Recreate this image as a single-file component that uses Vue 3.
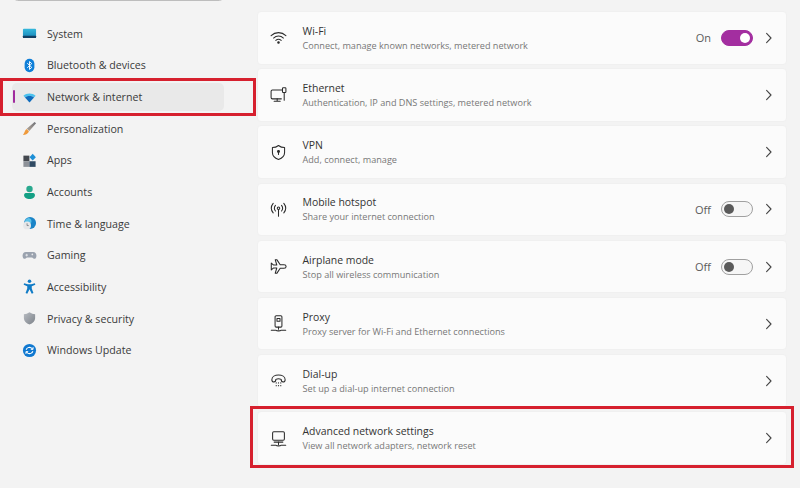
<script setup>
const nav = [
  { label: 'System', icon: 'system' },
  { label: 'Bluetooth & devices', icon: 'bluetooth' },
  { label: 'Network & internet', icon: 'network', active: true },
  { label: 'Personalization', icon: 'brush' },
  { label: 'Apps', icon: 'apps' },
  { label: 'Accounts', icon: 'accounts' },
  { label: 'Time & language', icon: 'time' },
  { label: 'Gaming', icon: 'gaming' },
  { label: 'Accessibility', icon: 'access' },
  { label: 'Privacy & security', icon: 'privacy' },
  { label: 'Windows Update', icon: 'update' }
]
const rows = [
  { title: 'Wi-Fi', sub: 'Connect, manage known networks, metered network', icon: 'wifi', state: 'On', on: true },
  { title: 'Ethernet', sub: 'Authentication, IP and DNS settings, metered network', icon: 'ethernet' },
  { title: 'VPN', sub: 'Add, connect, manage', icon: 'vpn' },
  { title: 'Mobile hotspot', sub: 'Share your internet connection', icon: 'hotspot', state: 'Off', on: false },
  { title: 'Airplane mode', sub: 'Stop all wireless communication', icon: 'plane', state: 'Off', on: false },
  { title: 'Proxy', sub: 'Proxy server for Wi-Fi and Ethernet connections', icon: 'proxy' },
  { title: 'Dial-up', sub: 'Set up a dial-up internet connection', icon: 'dial' },
  { title: 'Advanced network settings', sub: 'View all network adapters, network reset', icon: 'advanced' }
]
</script>

<template>
  <div class="page">
    <aside class="side">
      <div class="searchedge"></div>
      <ul class="nav">
        <li v-for="n in nav" :key="n.label" class="navitem" :class="{ active: n.active }">
          <span v-if="n.active" class="pill"></span>
          <svg class="navicon" viewBox="0 0 16 16">
            <template v-if="n.icon === 'system'">
              <defs><linearGradient id="sys" x1="0" y1="0" x2="0" y2="1"><stop offset="0" stop-color="#35b8dc"/><stop offset="1" stop-color="#1685b8"/></linearGradient></defs>
              <rect x="1" y="3" width="14" height="9.5" rx="1" fill="url(#sys)"/>
              <rect x="1" y="10.4" width="14" height="2.4" rx="0.6" fill="#123f63"/>
            </template>
            <template v-else-if="n.icon === 'bluetooth'">
              <rect x="2.8" y="0.9" width="10.4" height="14.2" rx="5.2" fill="#0f7fd8"/>
              <path d="M5.6 5.6 10.4 10 8 12.2V3.8L10.4 6 5.6 10.4" fill="none" stroke="#fff" stroke-width="1"/>
            </template>
            <template v-else-if="n.icon === 'network'">
              <path d="M1.5 6C5 3 11 3 14.5 6L12.8 8C10 6 6 6 3.2 8Z" fill="#4cc2ee"/>
              <path d="M3.2 8C6 6 10 6 12.8 8L8 13.2Z" fill="#0f6cbd"/>
            </template>
            <template v-else-if="n.icon === 'brush'">
              <defs><linearGradient id="brh" x1="1" y1="0" x2="0" y2="1"><stop offset="0" stop-color="#6d7076"/><stop offset="1" stop-color="#b4a79a"/></linearGradient></defs>
              <path d="M13.4 1 15 2.4 7.8 10.6 5 8.2Z" fill="url(#brh)"/>
              <path d="M4.8 8.6 7.4 10.9C6.8 13.4 4 14.8 1 15 2.6 13.4 2.8 10 4.8 8.6Z" fill="#ef9a3c"/>
            </template>
            <template v-else-if="n.icon === 'apps'">
              <rect x="1.5" y="2.8" width="6.4" height="6" fill="#43474e"/>
              <rect x="1.5" y="8.8" width="6.4" height="6" fill="#8d9198"/>
              <rect x="7.9" y="8.8" width="6.6" height="6" fill="#2f4a63"/>
              <path d="M11.4 0.9 14.8 4.4 11.4 7.9 8 4.4Z" fill="#1d8fd6"/>
            </template>
            <template v-else-if="n.icon === 'accounts'">
              <circle cx="8" cy="4.2" r="3.4" fill="#2aa98f"/>
              <path d="M2.2 11C2.2 9 3.4 8.6 5 8.6H11C12.6 8.6 13.8 9 13.8 11 13.8 13.6 11 15 8 15S2.2 13.6 2.2 11Z" fill="#14a085"/>
            </template>
            <template v-else-if="n.icon === 'time'">
              <circle cx="8.6" cy="7.4" r="6.4" fill="#1a84c7"/>
              <path d="M7 2.2C9.4 2.6 10.6 4.4 10 6.6 9.2 8.4 7 8 5.8 9.8 4.4 8.4 3 7.4 3 6 3.6 4 5 2.6 7 2.2Z" fill="#5cc3ea"/>
              <circle cx="5.4" cy="10" r="4.2" fill="#e6e7e9"/>
              <path d="M5.4 7.8V10.2H7.2" fill="none" stroke="#6b6f75" stroke-width="0.8"/>
            </template>
            <template v-else-if="n.icon === 'gaming'">
              <path d="M4 4.2H12C14 4.2 15.4 6 15.4 8.2 15.4 10.6 14 12 12.6 11.4L10.8 10.2H5.2L3.4 11.4C2 12 0.6 10.6 0.6 8.2 0.6 6 2 4.2 4 4.2Z" fill="#9aa2ae"/>
              <circle cx="11" cy="6.8" r="0.9" fill="#e8eaec"/>
              <path d="M3.6 7.6H6.4M5 6.2V9" stroke="#e8eaec" stroke-width="0.9"/>
            </template>
            <template v-else-if="n.icon === 'access'">
              <circle cx="8" cy="2.4" r="1.9" fill="#0f7bc6"/>
              <path d="M2.2 4.4 6.2 5.6H9.8L13.8 4.4 14.2 6 10.4 7.6V10L12.2 15 10.4 15.6 8 10.8 5.6 15.6 3.8 15 5.6 10V7.6L1.8 6Z" fill="#0f7bc6"/>
            </template>
            <template v-else-if="n.icon === 'privacy'">
              <defs><linearGradient id="prv" x1="0" y1="0" x2="1" y2="1"><stop offset="0" stop-color="#b8bcc2"/><stop offset="1" stop-color="#7c8289"/></linearGradient></defs>
              <path d="M8 1.4C10 2.8 12 3.4 14 3.4V7.6C14 10.8 11.4 13 8 14.4 4.6 13 2 10.8 2 7.6V3.4C4 3.4 6 2.8 8 1.4Z" fill="url(#prv)"/>
            </template>
            <template v-else-if="n.icon === 'update'">
              <circle cx="8" cy="8" r="7" fill="#0f78d0"/>
              <path d="M4.4 7.2C5 5 7.8 4 9.8 5.2L11.4 6.4M11.6 8.8C11 11 8.2 12 6.2 10.8L4.6 9.6" fill="none" stroke="#fff" stroke-width="1.1"/>
              <path d="M11.8 4.4V6.8H9.4M4.2 11.6V9.2H6.6" fill="none" stroke="#fff" stroke-width="1"/>
            </template>
          </svg>
          <span class="navlabel">{{ n.label }}</span>
        </li>
      </ul>
    </aside>

    <main class="main">
      <div v-for="r in rows" :key="r.title" class="card">
        <svg class="rowicon" viewBox="0 0 20 20" fill="none" stroke="#2b2b2b" stroke-width="1.1" stroke-linecap="round" stroke-linejoin="round">
          <template v-if="r.icon === 'wifi'">
            <path d="M2.2 8C6.6 3.8 13.4 3.8 17.8 8"/>
            <path d="M4.8 10.6C7.8 7.8 12.2 7.8 15.2 10.6"/>
            <path d="M7.2 13C8.8 11.6 11.2 11.6 12.8 13"/>
            <circle cx="10" cy="15.2" r="0.8" fill="#2b2b2b"/>
          </template>
          <template v-else-if="r.icon === 'ethernet'">
            <path d="M14 5.2H3.6C2.8 5.2 2.2 5.8 2.2 6.6V13.2C2.2 14 2.8 14.6 3.6 14.6H13"/>
            <path d="M8.6 14.6V17M5.4 17H11.8"/>
            <rect x="14.2" y="3" width="3.6" height="5" rx="0.8"/>
            <path d="M16 8V16"/>
          </template>
          <template v-else-if="r.icon === 'vpn'">
            <path d="M10 2.6C12 4.2 14.2 4.8 16.4 4.8V10C16.4 13.4 13.8 16 10 17.4 6.2 16 3.6 13.4 3.6 10V4.8C5.8 4.8 8 4.2 10 2.6Z"/>
            <circle cx="10" cy="9" r="1" fill="#2b2b2b"/>
            <path d="M10 9V12"/>
          </template>
          <template v-else-if="r.icon === 'hotspot'">
            <circle cx="10" cy="8.6" r="1.3"/>
            <path d="M10 10V17"/>
            <path d="M6.8 5.6C5.4 7.4 5.4 9.8 6.8 11.6M13.2 5.6C14.6 7.4 14.6 9.8 13.2 11.6"/>
            <path d="M4.4 3.6C2 6.6 2 10.6 4.4 13.6M15.6 3.6C18 6.6 18 10.6 15.6 13.6"/>
          </template>
          <template v-else-if="r.icon === 'plane'">
            <path d="M2.4 6.4 4.6 8.4H8.2L6.6 3H8.4L11.8 8.2H15.8C17.2 8.2 18 9 18 10S17.2 11.8 15.8 11.8H11.8L8.4 17H6.6L8.2 11.6H4.6L2.4 13.6Z"/>
          </template>
          <template v-else-if="r.icon === 'proxy'">
            <rect x="6.4" y="1.8" width="7.2" height="12" rx="1.2"/>
            <path d="M8.4 4.8H11.6V7.6H8.4Z"/>
            <path d="M10 13.8V16"/>
            <path d="M2.4 17H7.4C8 18 12 18 12.6 17H17.6"/>
          </template>
          <template v-else-if="r.icon === 'dial'">
            <path d="M3 9.2C3 2.6 17 2.6 17 9.2 17 11 16 11.6 14.8 11.6 13.4 11.6 12.8 10.8 12.8 8.8 11.2 8 8.8 8 7.2 8.8 7.2 10.8 6.6 11.6 5.2 11.6 4 11.6 3 11 3 9.2Z"/>
            <g fill="#2b2b2b" stroke="none">
              <circle cx="7.6" cy="12.6" r="0.65"/><circle cx="10" cy="12.6" r="0.65"/><circle cx="12.4" cy="12.6" r="0.65"/>
              <circle cx="7.6" cy="15.4" r="0.65"/><circle cx="10" cy="15.4" r="0.65"/><circle cx="12.4" cy="15.4" r="0.65"/>
            </g>
          </template>
          <template v-else-if="r.icon === 'advanced'">
            <rect x="3.8" y="3" width="12.4" height="8.8" rx="1.2"/>
            <path d="M5.4 13.8H14.6"/>
            <path d="M10 13.8V16.4"/>
            <path d="M2.4 17H7.4C8 18 12 18 12.6 17H17.6"/>
          </template>
        </svg>
        <div class="text">
          <div class="title">{{ r.title }}</div>
          <div class="sub">{{ r.sub }}</div>
        </div>
        <div class="right">
          <template v-if="r.state">
            <span class="state">{{ r.state }}</span>
            <span class="toggle" :class="{ on: r.on }"><span class="knob"></span></span>
          </template>
          <svg class="chev" viewBox="0 0 8 12" fill="none" stroke="#444" stroke-width="1.1" stroke-linecap="round" stroke-linejoin="round"><path d="M1.6 1.4 6 6 1.6 10.6"/></svg>
        </div>
      </div>
    </main>

    <div class="mark mark-nav"></div>
    <div class="mark mark-adv"></div>
  </div>
</template>

<style>
html, body { margin: 0; background: #f3f3f3; }
</style>

<style scoped>
.page {
  position: relative;
  width: 800px;
  height: 488px;
  overflow: hidden;
  display: flex;
  background: #f3f3f3;
  font-family: "Open Sans", "Noto Sans", sans-serif;
  color: #333;
}
.side {
  width: 257px;
  flex: none;
  position: relative;
}
.searchedge {
  position: absolute;
  left: 14px;
  top: -6px;
  width: 209px;
  height: 7px;
  box-sizing: border-box;
  background: #f8f8f8;
  border: 1px solid #bdbdbd;
  border-radius: 4px;
}
.nav {
  list-style: none;
  margin: 0;
  padding: 19.8px 0 0 12px;
  width: 212px;
  display: flex;
  flex-direction: column;
  gap: 3.65px;
}
.navitem {
  position: relative;
  height: 28px;
  flex: none;
  display: flex;
  align-items: center;
  padding-left: 9.5px;
  font-size: 10.65px;
  border-radius: 5px;
}
.navitem.active { background: #e9e9e9; }
.pill {
  position: absolute;
  left: 0.8px;
  top: 7px;
  width: 2.3px;
  height: 13px;
  border-radius: 1px;
  background: #a02c9e;
}
.navicon { width: 15px; height: 15px; flex: none; }
.navlabel { margin-left: 10.5px; color: #3a3a3a; }
.main {
  flex: 1;
  padding: 11px 13px 0 0;
  display: flex;
  flex-direction: column;
  gap: 3.7px;
}
.card {
  height: 53.5px;
  flex: none;
  box-sizing: border-box;
  background: #fbfbfb;
  border: 1px solid #f0f0f0;
  border-radius: 4px;
  display: flex;
  align-items: center;
  padding: 0 13px 0 11px;
}
.rowicon { width: 19px; height: 19px; flex: none; }
.text { margin-left: 14.5px; flex: 1; }
.title { font-size: 10.45px; line-height: 15px; color: #333; }
.sub { font-size: 9.15px; line-height: 13px; color: #777; }
.right { display: flex; align-items: center; }
.state { font-size: 11px; color: #5c5c5c; margin-right: 10px; }
.toggle {
  width: 32px;
  height: 16px;
  box-sizing: border-box;
  border-radius: 8px;
  border: 1px solid #a0a0a0;
  background: #f6f6f6;
  display: flex;
  align-items: center;
  padding: 0 2px;
  margin-right: 12px;
}
.toggle .knob { width: 10px; height: 10px; border-radius: 50%; background: #5a5a5a; }
.toggle.on { background: #a32ea0; border-color: #a32ea0; justify-content: flex-end; }
.toggle.on .knob { background: #fff; }
.chev { width: 8px; height: 12px; flex: none; }
.mark { position: absolute; border: 3px solid #d6202e; box-sizing: border-box; pointer-events: none; }
.mark-nav { left: 0; top: 78px; width: 256px; height: 38px; }
.mark-adv { left: 250px; top: 406px; width: 544px; height: 62px; }
</style>
